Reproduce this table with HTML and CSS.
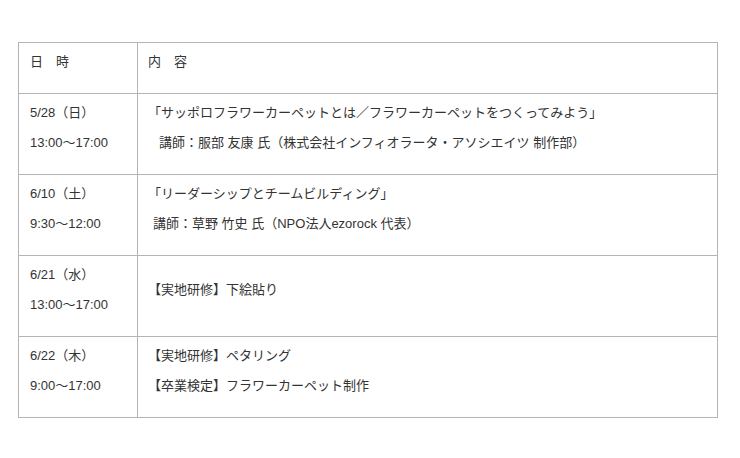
FILE: index.html
```html
<!DOCTYPE html>
<html lang="ja">
<head>
<meta charset="utf-8">
<link rel="stylesheet" href="styles.css">
</head>
<body>
<table class="schedule">
  <tr class="head">
    <td class="when">日　時</td>
    <td class="what">内　容</td>
  </tr>
  <tr>
    <td class="when"><div>5/28（日）</div><div>13:00～17:00</div></td>
    <td class="what"><div>「サッポロフラワーカーペットとは／フラワーカーペットをつくってみよう」</div><div class="ind-a">講師：服部 友康 氏（株式会社インフィオラータ・アソシエイツ 制作部）</div></td>
  </tr>
  <tr>
    <td class="when"><div>6/10（土）</div><div>9:30～12:00</div></td>
    <td class="what"><div>「リーダーシップとチームビルディング」</div><div class="ind-b">講師：草野 竹史 氏（NPO法人ezorock 代表）</div></td>
  </tr>
  <tr>
    <td class="when"><div>6/21（水）</div><div>13:00～17:00</div></td>
    <td class="what"><div>【実地研修】下絵貼り</div></td>
  </tr>
  <tr>
    <td class="when"><div>6/22（木）</div><div>9:00～17:00</div></td>
    <td class="what"><div>【実地研修】ペタリング</div><div>【卒業検定】フラワーカーペット制作</div></td>
  </tr>
</table>
</body>
</html>
```
FILE: styles.css
```css
html, body {
  margin: 0;
  padding: 0;
  background: #fff;
}
body {
  padding: 42px 0 0 18px;
  font-family: "Liberation Sans", "Noto Sans CJK JP", sans-serif;
  font-size: 13px;
  color: #333;
}
.schedule {
  border-collapse: collapse;
  width: 700px;
}
.schedule td {
  border: 1px solid #b4b4b4;
  padding: 4px 10px 16px 11px;
  line-height: 30px;
  vertical-align: middle;
  white-space: nowrap;
}
.schedule td.when {
  width: 97px;
}
.schedule td.what {
  padding-left: 10px;
}
.ind-a {
  padding-left: 11px;
}
.ind-b {
  padding-left: 5px;
}
```
